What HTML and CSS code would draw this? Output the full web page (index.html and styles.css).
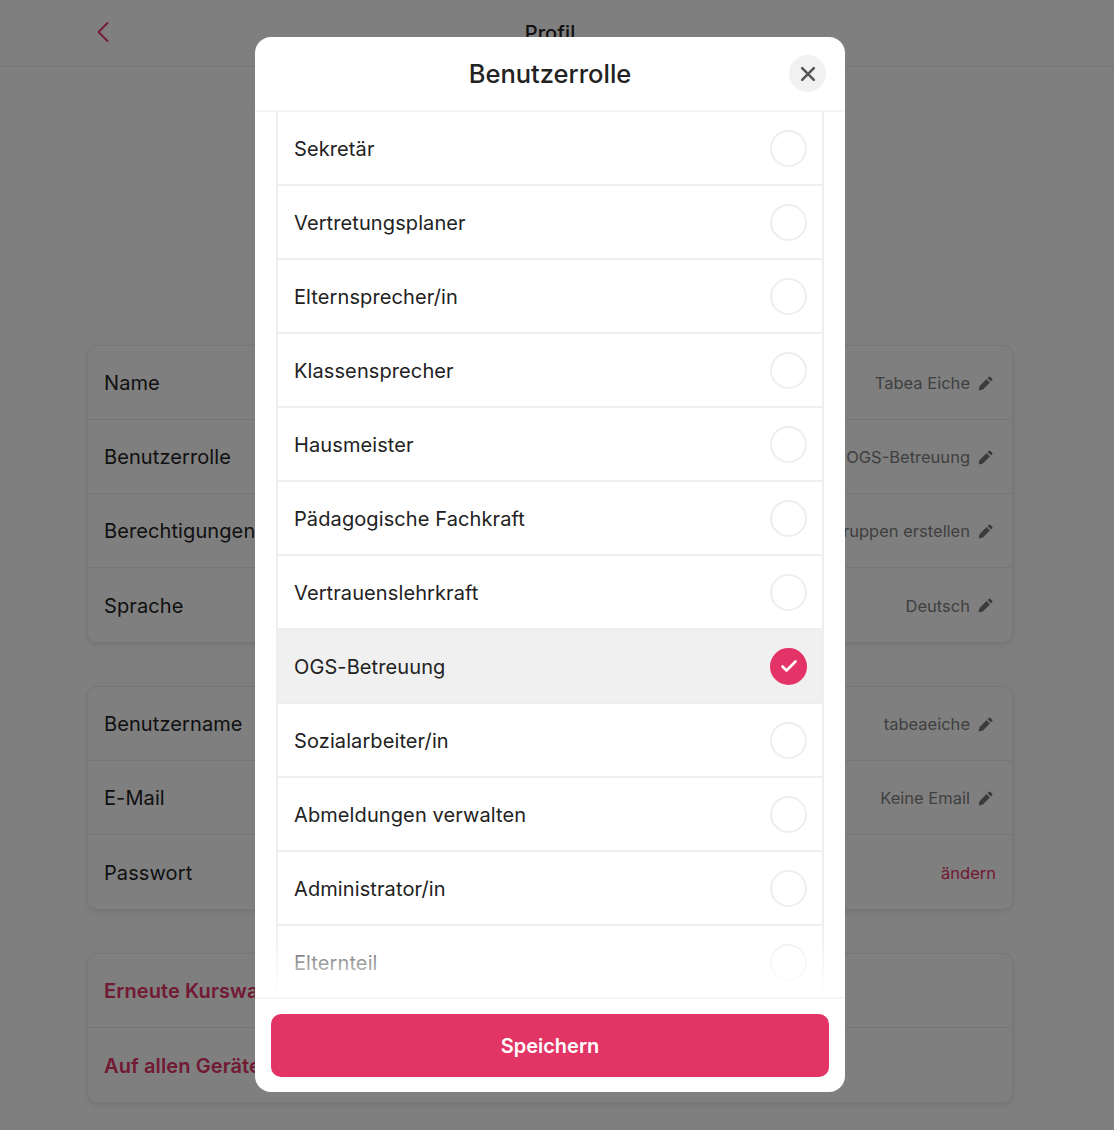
FILE: index.html
```html
<!DOCTYPE html>
<html lang="de">
<head>
  <meta charset="UTF-8">
  <title>Profil</title>
  <link rel="stylesheet" href="styles.css">
</head>
<body>
  <div class="page">
    <header class="topbar">
      <svg class="back-icon" width="14" height="22" viewBox="0 0 14 22"><path d="M11.5 2 2.5 11l9 9" fill="none" stroke="#e43367" stroke-width="1.8" stroke-linecap="round" stroke-linejoin="round"/></svg>
      <span class="topbar-title">Profil</span>
    </header>

    <section class="card card-first">
      <div class="row"><span>Name</span><span class="row-value">Tabea Eiche <svg class="pen" viewBox="0 0 24 24"><path d="M1 23l1.3-6.8L13.6 4.9l5.5 5.5L7.8 21.7zM15.2 3.3l1.9-1.9a2 2 0 0 1 2.8 0l2.7 2.7a2 2 0 0 1 0 2.8l-1.9 1.9z"/></svg></span></div>
      <div class="row"><span>Benutzerrolle</span><span class="row-value">OGS-Betreuung <svg class="pen" viewBox="0 0 24 24"><path d="M1 23l1.3-6.8L13.6 4.9l5.5 5.5L7.8 21.7zM15.2 3.3l1.9-1.9a2 2 0 0 1 2.8 0l2.7 2.7a2 2 0 0 1 0 2.8l-1.9 1.9z"/></svg></span></div>
      <div class="row"><span>Berechtigungen</span><span class="row-value">Gruppen erstellen <svg class="pen" viewBox="0 0 24 24"><path d="M1 23l1.3-6.8L13.6 4.9l5.5 5.5L7.8 21.7zM15.2 3.3l1.9-1.9a2 2 0 0 1 2.8 0l2.7 2.7a2 2 0 0 1 0 2.8l-1.9 1.9z"/></svg></span></div>
      <div class="row"><span>Sprache</span><span class="row-value">Deutsch <svg class="pen" viewBox="0 0 24 24"><path d="M1 23l1.3-6.8L13.6 4.9l5.5 5.5L7.8 21.7zM15.2 3.3l1.9-1.9a2 2 0 0 1 2.8 0l2.7 2.7a2 2 0 0 1 0 2.8l-1.9 1.9z"/></svg></span></div>
    </section>

    <section class="card">
      <div class="row"><span>Benutzername</span><span class="row-value">tabeaeiche <svg class="pen" viewBox="0 0 24 24"><path d="M1 23l1.3-6.8L13.6 4.9l5.5 5.5L7.8 21.7zM15.2 3.3l1.9-1.9a2 2 0 0 1 2.8 0l2.7 2.7a2 2 0 0 1 0 2.8l-1.9 1.9z"/></svg></span></div>
      <div class="row"><span>E-Mail</span><span class="row-value">Keine Email <svg class="pen" viewBox="0 0 24 24"><path d="M1 23l1.3-6.8L13.6 4.9l5.5 5.5L7.8 21.7zM15.2 3.3l1.9-1.9a2 2 0 0 1 2.8 0l2.7 2.7a2 2 0 0 1 0 2.8l-1.9 1.9z"/></svg></span></div>
      <div class="row"><span>Passwort</span><span class="row-link">ändern</span></div>
    </section>

    <section class="card">
      <div class="row row-danger"><span>Erneute Kurswahl</span></div>
      <div class="row row-danger"><span>Auf allen Geräten abmelden</span></div>
    </section>
  </div>

  <div class="overlay">
    <div class="modal">
      <div class="modal-head">
        <h2>Benutzerrolle</h2>
        <button class="close-btn" type="button">
          <svg width="16" height="16" viewBox="0 0 16 16"><path d="M2.2 2.2l11.6 11.6M13.8 2.2 2.2 13.8" stroke="#555" stroke-width="2.6" stroke-linecap="round"/></svg>
        </button>
      </div>
      <div class="role-wrap">
        <ul class="role-list">
          <li class="role">Sekretär<span class="radio"></span></li>
          <li class="role">Vertretungsplaner<span class="radio"></span></li>
          <li class="role">Elternsprecher/in<span class="radio"></span></li>
          <li class="role">Klassensprecher<span class="radio"></span></li>
          <li class="role">Hausmeister<span class="radio"></span></li>
          <li class="role">Pädagogische Fachkraft<span class="radio"></span></li>
          <li class="role">Vertrauenslehrkraft<span class="radio"></span></li>
          <li class="role role-active">OGS-Betreuung<span class="radio radio-on"><svg width="18" height="14" viewBox="0 0 18 14"><path d="M2.5 7.5l4 4 9-9" fill="none" stroke="#fff" stroke-width="2.6" stroke-linecap="round" stroke-linejoin="round"/></svg></span></li>
          <li class="role">Sozialarbeiter/in<span class="radio"></span></li>
          <li class="role">Abmeldungen verwalten<span class="radio"></span></li>
          <li class="role">Administrator/in<span class="radio"></span></li>
          <li class="role">Elternteil<span class="radio"></span></li>
        </ul>
        <div class="fade"></div>
      </div>
      <div class="modal-foot">
        <button class="save-btn" type="button">Speichern</button>
      </div>
    </div>
  </div>
</body>
</html>
```

FILE: styles.css
```css
* {
  box-sizing: border-box;
}
html, body {
  margin: 0;
  height: 1130px;
  overflow: hidden;
}
body {
  font-family: "Inter", "Noto Sans", sans-serif;
  background: #fff;
  color: #222;
  font-size: 20px;
  letter-spacing: 0.1px;
}
.topbar {
  height: 67px;
  border-bottom: 1px solid #ececec;
  padding: 0 101px 0 87px;
  display: flex;
  align-items: center;
  position: relative;
}
.back-icon {
  margin: -2px 0 0 9px;
}
.topbar-title {
  position: absolute;
  left: 0;
  right: 14px;
  top: 21px;
  text-align: center;
  font-weight: 500;
}
.card {
  margin: 43px 101px 0 87px;
  border: 1px solid #ececec;
  border-radius: 10px;
  box-shadow: 0 2px 6px rgba(0,0,0,0.1);
}
.card-first {
  margin-top: 278px;
}
.row {
  height: 74px;
  padding: 1px 16px 0;
  display: flex;
  justify-content: space-between;
  align-items: center;
  border-bottom: 1px solid #ececec;
}
.row:last-child {
  border-bottom: none;
}
.row-value {
  font-size: 16.5px;
  letter-spacing: 0;
  color: #808080;
  display: flex;
  align-items: center;
  gap: 8px;
  padding-right: 3px;
}
.pen {
  width: 15px;
  height: 15px;
  fill: #777;
}
.row-link {
  font-size: 16.5px;
  letter-spacing: 0;
  color: #e43367;
}
.row-danger {
  color: #e43367;
  font-weight: 600;
}
.overlay {
  position: absolute;
  inset: 0;
  background: rgba(0,0,0,0.5);
  display: flex;
  justify-content: center;
  align-items: flex-start;
  padding: 37px 14px 0 0;
}
.modal {
  width: 590px;
  height: 1055px;
  background: #fff;
  border-radius: 16px;
  display: flex;
  flex-direction: column;
}
.modal-head {
  height: 75px;
  flex: none;
  border-bottom: 2px solid #f5f5f5;
  display: flex;
  align-items: center;
  justify-content: center;
  position: relative;
}
.modal-head h2 {
  margin: 0;
  font-size: 25.5px;
  font-weight: 500;
  letter-spacing: 0;
  color: #222;
}
.close-btn {
  position: absolute;
  right: 19px;
  top: 18px;
  width: 37px;
  height: 37px;
  border: none;
  border-radius: 50%;
  background: #f1f1f1;
  display: flex;
  align-items: center;
  justify-content: center;
  padding: 0;
}
.role-wrap {
  flex: 1;
  overflow: hidden;
  position: relative;
  padding: 0 21px;
}
.role-list {
  list-style: none;
  margin: 0;
  padding: 0;
  border-left: 2px solid #eee;
  border-right: 2px solid #eee;
}
.role {
  height: 74px;
  padding: 2px 15px 0 16px;
  display: flex;
  justify-content: space-between;
  align-items: center;
  border-bottom: 2px solid #eee;
  color: #222;
}
.role-active {
  background: #f0f0f0;
}
.radio {
  width: 37px;
  height: 37px;
  margin-top: -2px;
  border-radius: 50%;
  border: 2px solid #eee;
  background: #fff;
  display: flex;
  align-items: center;
  justify-content: center;
}
.radio-on {
  background: #e43367;
  border-color: #e43367;
}
.fade {
  position: absolute;
  left: 0;
  right: 0;
  bottom: 0;
  height: 76px;
  background: linear-gradient(rgba(255,255,255,0), #fff);
}
.modal-foot {
  flex: none;
  height: 95px;
  border-top: 2px solid #f5f5f5;
  padding: 15px 16px;
}
.save-btn {
  width: 100%;
  height: 63px;
  border: none;
  border-radius: 10px;
  background: #e33466;
  color: #fff;
  font-family: inherit;
  font-size: 20px;
  font-weight: 600;
}
```
